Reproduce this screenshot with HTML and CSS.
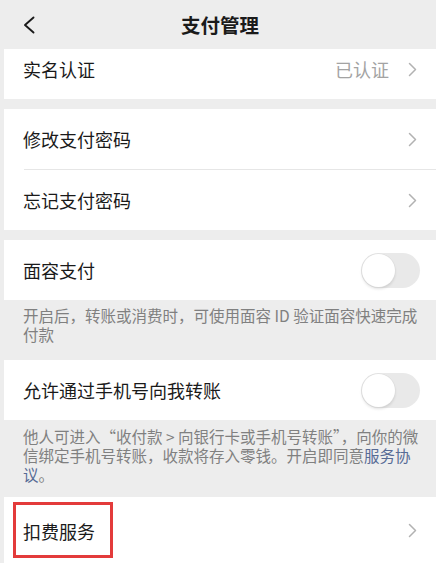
FILE: index.html
```html
<!DOCTYPE html>
<html lang="zh-CN">
<head>
<meta charset="utf-8">
<title>支付管理</title>
<link rel="stylesheet" href="styles.css">
</head>
<body>
<div class="page">
  <header class="navbar">
    <div class="nav-left">
      <svg class="back" width="12" height="18" viewBox="0 0 12 18"><polyline points="10.5,1.5 2,9 10.5,16.5" fill="none" stroke="#1a1a1a" stroke-width="1.9" stroke-linecap="round" stroke-linejoin="round"/></svg>
    </div>
    <div class="nav-title">支付管理</div>
    <div class="nav-right"></div>
  </header>

  <section class="group">
    <div class="row row-first">
      <span class="label">实名认证</span>
      <span class="value">已认证</span>
      <svg class="chev" width="9" height="15" viewBox="0 0 9 15"><polyline points="1.5,1.5 7.5,7.5 1.5,13.5" fill="none" stroke="#b2b2b2" stroke-width="1.5" stroke-linecap="round" stroke-linejoin="round"/></svg>
    </div>
  </section>

  <section class="group">
    <div class="row">
      <span class="label">修改支付密码</span>
      <svg class="chev" width="9" height="15" viewBox="0 0 9 15"><polyline points="1.5,1.5 7.5,7.5 1.5,13.5" fill="none" stroke="#b2b2b2" stroke-width="1.5" stroke-linecap="round" stroke-linejoin="round"/></svg>
    </div>
    <div class="divider"></div>
    <div class="row">
      <span class="label">忘记支付密码</span>
      <svg class="chev" width="9" height="15" viewBox="0 0 9 15"><polyline points="1.5,1.5 7.5,7.5 1.5,13.5" fill="none" stroke="#b2b2b2" stroke-width="1.5" stroke-linecap="round" stroke-linejoin="round"/></svg>
    </div>
  </section>

  <section class="group">
    <div class="row row-switch">
      <span class="label">面容支付</span>
      <span class="switch"><span class="knob"></span></span>
    </div>
  </section>
  <p class="desc desc-one">开启后，转账或消费时，可使用面容 ID 验证面容快速完成付款</p>

  <section class="group group-tight">
    <div class="row row-switch">
      <span class="label">允许通过手机号向我转账</span>
      <span class="switch"><span class="knob"></span></span>
    </div>
  </section>
  <p class="desc desc-two">他人可进入“收付款 &gt; 向银行卡或手机号转账”，向你的微信绑定手机号转账，收款将存入零钱。开启即同意<span class="link">服务协议</span>。</p>

  <section class="group group-tight">
    <div class="row row-last">
      <span class="label">扣费服务</span>
      <svg class="chev" width="9" height="15" viewBox="0 0 9 15"><polyline points="1.5,1.5 7.5,7.5 1.5,13.5" fill="none" stroke="#b2b2b2" stroke-width="1.5" stroke-linecap="round" stroke-linejoin="round"/></svg>
      <span class="highlight"></span>
    </div>
  </section>
</div>
</body>
</html>
```

FILE: styles.css
```css
html, body {
  margin: 0;
  padding: 0;
  background: #ededed;
}

body {
  font-family: "Noto Sans CJK SC", "Noto Sans", sans-serif;
  color: #1a1a1a;
  overflow: hidden;
  height: 563px;
}

.page {
  margin-left: 4px;
}

.navbar {
  height: 49px;
  display: grid;
  grid-template-columns: 1fr auto 1fr;
  align-items: center;
  background: #ededed;
}

.nav-left {
  padding-left: 19px;
  display: flex;
  align-items: center;
}

.back {
  display: block;
  margin-top: 1px;
}

.nav-title {
  font-size: 19.5px;
  font-weight: 600;
  line-height: 1;
  color: #1a1a1a;
}

.group {
  background: #ffffff;
  margin-top: 10px;
}

.group:first-of-type {
  margin-top: 0;
}

.group-tight {
  margin-top: 0;
}

.row {
  position: relative;
  height: 60px;
  box-sizing: border-box;
  display: flex;
  align-items: center;
  padding: 0 19px 0 19px;
  font-size: 18px;
}

.row-first {
  height: 50px;
  padding-bottom: 10px;
}

.row-switch {
  padding-right: 16px;
}

.row-last {
  height: 66px;
  padding-top: 1px;
}

.label {
  flex: 1;
  line-height: 1;
}

.value {
  color: #a3a3a3;
  line-height: 1;
  margin-right: 19px;
}

.chev {
  display: block;
}

.divider {
  height: 1px;
  background: #e6e6e6;
  margin-left: 20px;
}

.switch {
  width: 59px;
  height: 35px;
  border-radius: 18px;
  background: #e9e9e9;
  display: flex;
  align-items: center;
  padding: 0 1px;
  box-sizing: border-box;
}

.knob {
  width: 33px;
  height: 33px;
  border-radius: 50%;
  background: #ffffff;
  box-shadow: 0 0 0 0.6px #dcdcdc, 0 2px 3px rgba(0, 0, 0, 0.12);
}

.desc {
  margin: 0;
  font-size: 15.5px;
  line-height: 19px;
  color: #808080;
  padding: 6px 16px 16px 19px;
}

.desc-two {
  padding-top: 7px;
  padding-bottom: 13px;
}

.link {
  color: #576b95;
}

.highlight {
  position: absolute;
  left: 9px;
  top: 5px;
  width: 100px;
  height: 56px;
  border: 3px solid #e33b3b;
  box-sizing: border-box;
}
```
